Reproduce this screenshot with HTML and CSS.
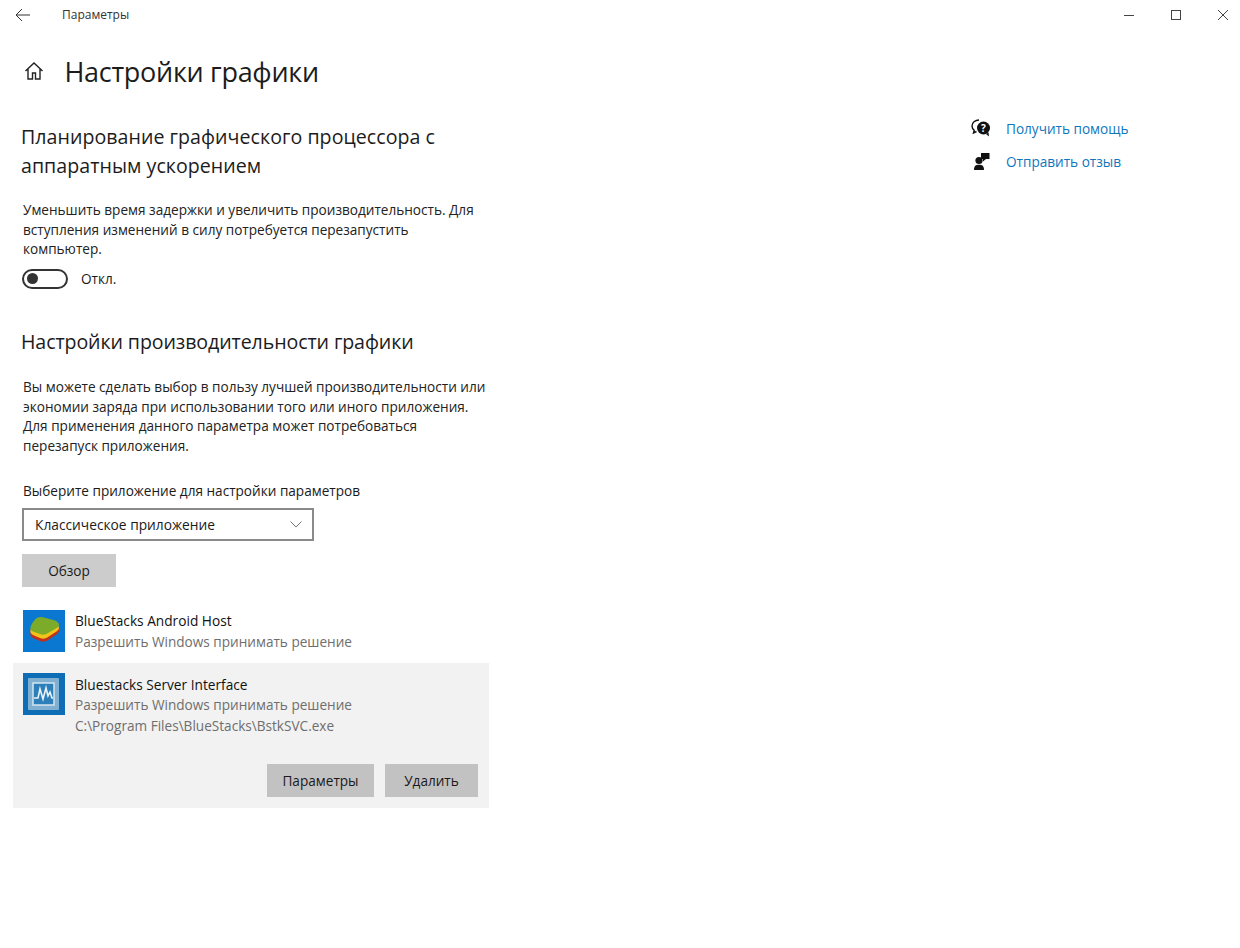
FILE: index.html
```html
<!DOCTYPE html>
<html lang="ru">
<head>
<meta charset="utf-8">
<title>Параметры</title>
<link rel="stylesheet" href="styles.css">
</head>
<body>
<header class="titlebar">
  <svg class="back" width="16" height="14" viewBox="0 0 16 14"><path d="M7 1 1 7l6 6M1 7h14" fill="none" stroke="#333" stroke-width="1"/></svg>
  <span class="apptitle">Параметры</span>
  <div class="winctl">
    <svg width="12" height="12" viewBox="0 0 12 12"><path d="M1 6.500h10" stroke="#444" stroke-width="1"/></svg>
    <svg width="12" height="12" viewBox="0 0 12 12"><rect x="1.500" y="1.500" width="9" height="9" fill="none" stroke="#444"/></svg>
    <svg width="12" height="12" viewBox="0 0 12 12"><path d="M1 1l10 10M11 1 1 11" stroke="#444" stroke-width="1"/></svg>
  </div>
</header>
<div class="page">
  <main class="main">
    <div class="pagehead">
      <svg class="home" width="20" height="20" viewBox="0 0 20 20"><path d="M1.500 10 10 2l8.500 8M4 8v10h4.500v-6h3v6H16V8" fill="none" stroke="#222" stroke-width="1.400"/></svg>
      <h1>Настройки графики</h1>
    </div>
    <section class="sec-gpu">
      <h2 class="h-gpu">Планирование графического процессора с аппаратным ускорением</h2>
      <p class="desc desc-gpu">Уменьшить время задержки и увеличить производительность. Для вступления изменений в силу потребуется перезапустить компьютер.</p>
      <div class="toggle-row">
        <span class="toggle"><span class="knob"></span></span>
        <span class="toggle-label">Откл.</span>
      </div>
    </section>
    <section class="sec-perf">
      <h2 class="h-perf">Настройки производительности графики</h2>
      <p class="desc desc-perf">Вы можете сделать выбор в пользу лучшей производительности или экономии заряда при использовании того или иного приложения. Для применения данного параметра может потребоваться перезапуск приложения.</p>
      <div class="select-label">Выберите приложение для настройки параметров</div>
      <div class="select">
        <span>Классическое приложение</span>
        <svg width="12" height="7" viewBox="0 0 12 7"><path d="M.5.500 6 6l5.500-5.500" fill="none" stroke="#777"/></svg>
      </div>
      <button class="btn btn-browse">Обзор</button>
      <div class="app app-first">
        <svg class="appicon" width="42" height="42" viewBox="0 0 42 42">
          <rect width="42" height="42" fill="#0a78d0"/>
          <path d="M7.500 21C9 17 12 12 15 10.500c2-1 4-.5 6 0L32 14c2 1 4 3 4 5v2c0 1.500-2 3-4 4.500L25 30c-3 2-5 2-8 1l-7-3c-2-1-3-3-2.500-5z" fill="#c2301c"/>
          <path d="M7.500 20C9 16 12 11 15 9.500c2-1 4-.5 6 0L32 13c2 1 4 3 4 5s-2 3-4 4.500L25 27c-3 2-5 2-8 1l-7-3c-2-1-3-3-2.500-5z" fill="#f2c31a"/>
          <path d="M7.500 17C9 13 12 8.500 15 7.500c2-1 4-.5 6 0L32 10.500c2 1 4 2.500 4 4.500s-2 2.500-4 4L25 23c-3 2-5 2-8 1l-7-2.500c-2-1-3-2.500-2.500-4.500z" fill="#7cab2a"/>
        </svg>
        <div class="apptext">
          <div class="appname">BlueStacks Android Host</div>
          <div class="appsub">Разрешить Windows принимать решение</div>
        </div>
      </div>
      <div class="app-selected">
        <div class="app">
          <svg class="appicon" width="42" height="42" viewBox="0 0 42 42">
            <rect width="42" height="42" fill="#0e6db5"/>
            <rect x="5" y="5" width="31" height="32" rx="1" fill="#7fb0d2"/>
            <rect x="10" y="10" width="21" height="22" fill="#2d7fba" stroke="#d5e6f1" stroke-width="1.500"/>
            <path d="M11 25h4l2-9 3 10 3-11 2 8 2-4 2 6h1" fill="none" stroke="#eaf3f9" stroke-width="1.600"/>
          </svg>
          <div class="apptext apptext-sel">
            <div class="appname">Bluestacks Server Interface</div>
            <div class="appsub">Разрешить Windows принимать решение</div>
            <div class="appsub">C:\Program Files\BlueStacks\BstkSVC.exe</div>
          </div>
        </div>
        <div class="app-actions">
          <button class="btn btn-dark btn-params">Параметры</button>
          <button class="btn btn-dark btn-del">Удалить</button>
        </div>
      </div>
    </section>
  </main>
  <aside class="help">
    <a class="helplink">
      <svg width="20" height="18" viewBox="0 0 20 18"><path d="M8 1C4 1 1 3.800 1 7c0 1.700.8 3.200 2.200 4.300L2.500 14l3-1.500" fill="none" stroke="#111" stroke-width="1.400"/><circle cx="12.500" cy="9" r="6.500" fill="#111"/><path d="M15 15l3 2.500-.5-4z" fill="#111"/><text x="12.500" y="12.500" text-anchor="middle" class="qmark">?</text></svg>
      <span>Получить помощь</span>
    </a>
    <a class="helplink">
      <svg width="20" height="18" viewBox="0 0 20 18"><circle cx="8" cy="8.500" r="3.600" fill="#111"/><path d="M3 18c0-4 1.800-5.200 5-5.200s5 1.200 5 5.200z" fill="#111"/><path d="M10 1h8.500v6H15l-3 2.500V7h-2z" fill="#111"/></svg>
      <span>Отправить отзыв</span>
    </a>
  </aside>
</div>
</body>
</html>
```
FILE: styles.css
```css
* { box-sizing: border-box; }
html, body { margin: 0; height: 100%; }
body {
  background: #fff;
  color: #1a1a1a;
  font-family: "Open Sans", "Noto Sans", sans-serif;
  font-size: 13.6px;
  overflow: hidden;
}
.titlebar {
  display: flex;
  align-items: center;
  height: 29px;
  padding-left: 15px;
}
.apptitle { margin-left: 31px; font-size: 12px; color: #333; }
.winctl {
  margin-left: auto;
  display: flex;
  gap: 35px;
  padding-right: 11px;
}
.page { display: flex; }
.main { width: 500px; padding-left: 22px; }
.pagehead { display: flex; align-items: center; height: 30px; margin-top: 27px; }
.home { margin-left: 2px; }
h1 { margin: 0 0 0 20.500px; font-size: 27px; font-weight: 400; letter-spacing: -.3px; color: #1c1c1c; }
h2 { margin: 0; font-weight: 400; font-size: 19.6px; line-height: 29px; color: #1c1c1c; }
.h-gpu { margin-left: -1px; letter-spacing: .04px; }
.sec-gpu { margin-top: 36px; }
.desc { margin: 20px 0 0 1px; font-size: 13.6px; line-height: 19.500px; color: #222; }
.desc-gpu { width: 460px; }
.toggle-row { display: flex; align-items: center; margin-top: 9px; height: 22px; }
.toggle {
  width: 46px; height: 20px;
  border: 2.500px solid #333; border-radius: 10px;
  display: flex; align-items: center; padding-left: 3px;
}
.knob { width: 11px; height: 11px; border-radius: 50%; background: #333; }
.toggle-label { margin-left: 13px; }
.sec-perf { margin-top: 37.500px; }
.h-perf { margin-left: -1px; letter-spacing: -.1px; }
.desc-perf { margin-top: 21px; width: 470px; }
.select-label { margin: 26px 0 0 1px; line-height: 19px; }
.select {
  display: flex; align-items: center; justify-content: space-between;
  width: 292px; height: 33px; margin-top: 8px;
  border: 2px solid #8a8a8a; padding: 0 10px 0 11px;
  font-size: 13.750px;
}
.btn {
  display: block; border: 0; padding: 0;
  font-family: inherit; font-size: 13.6px; color: #1a1a1a;
  background: #ccc; height: 33px;
}
.btn-browse { width: 94px; margin-top: 13px; }
.app { display: flex; gap: 10px; }
.app-first { margin: 23px 0 0 1px; }
.appicon { flex: none; }
.apptext-sel { margin-top: 1.500px; }
.appname { font-size: 13.7px; line-height: 21px; color: #111; }
.appsub { line-height: 21px; color: #6e6e6e; }
.apptext-sel .appname, .apptext-sel .appsub { line-height: 20.500px; }
.app-selected {
  margin: 11px 0 0 -9px;
  width: 476px; height: 145px;
  background: #f2f2f2;
  padding: 10px 11px 11px 10px;
  display: flex; flex-direction: column;
}
.app-actions { display: flex; justify-content: flex-end; gap: 11px; margin-top: auto; }
.btn-dark { background: #c2c2c2; }
.btn-params { width: 107px; }
.btn-del { width: 93px; }
.help { margin-left: 471px; padding-top: 89px; display: flex; flex-direction: column; gap: 13px; }
.helplink { display: flex; align-items: center; gap: 15px; height: 20px; color: #0f76bd; white-space: nowrap; }
.qmark { font-size: 10px; font-weight: 700; fill: #fff; }
```
